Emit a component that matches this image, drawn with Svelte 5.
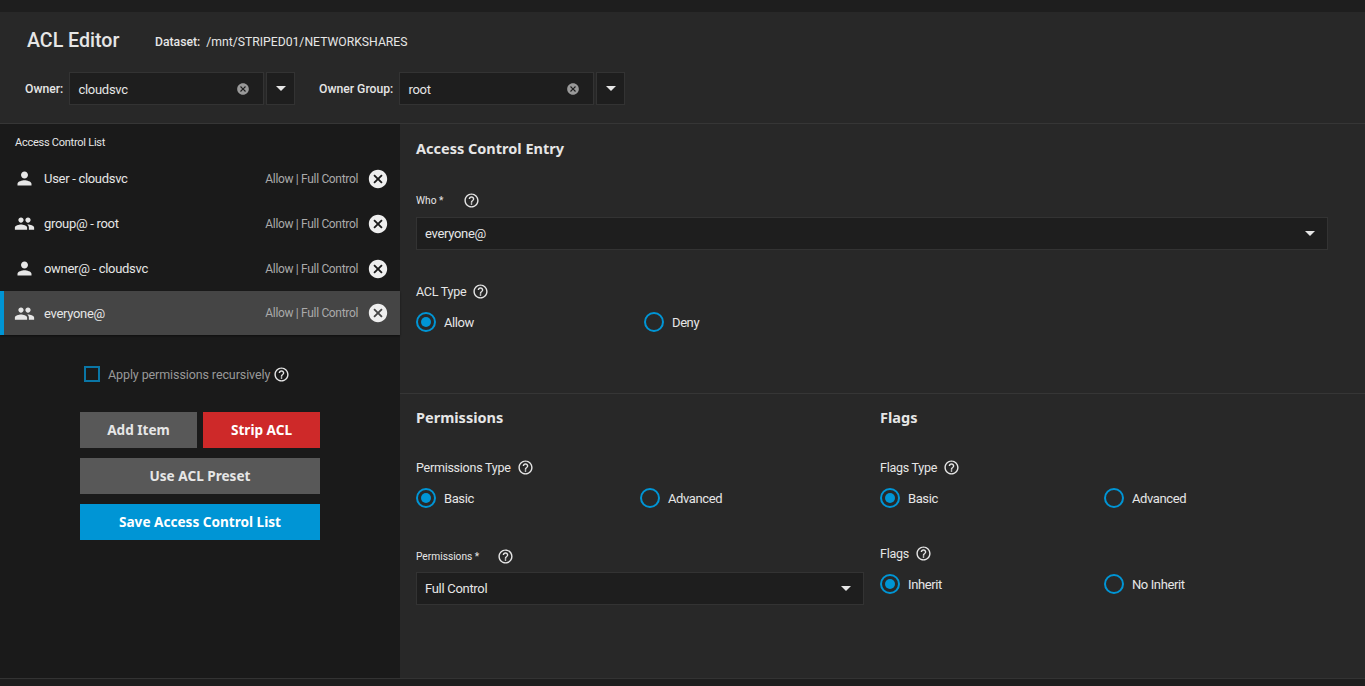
<script>
	const entries = [
		{ name: 'User - cloudsvc', group: false },
		{ name: 'group@ - root', group: true },
		{ name: 'owner@ - cloudsvc', group: false },
		{ name: 'everyone@', group: true }
	]

	let selected = $state(3)
	let aclType = $state('Allow')
	let permType = $state('Basic')
	let flagType = $state('Basic')
	let flags = $state('Inherit')

	const person = 'M12 12c2.21 0 4-1.79 4-4s-1.79-4-4-4-4 1.79-4 4 1.79 4 4 4zm0 2c-2.67 0-8 1.34-8 4v2h16v-2c0-2.66-5.33-4-8-4z'
	const people = 'M16 11c1.66 0 2.99-1.34 2.99-3S17.66 5 16 5c-1.66 0-3 1.34-3 3s1.34 3 3 3zm-8 0c1.66 0 2.99-1.34 2.99-3S9.66 5 8 5C6.34 5 5 6.34 5 8s1.34 3 3 3zm0 2c-2.33 0-7 1.17-7 3.5V19h14v-2.5c0-2.33-4.67-3.5-7-3.5zm8 0c-.29 0-.62.02-.97.05 1.16.84 1.97 1.97 1.97 3.45V19h6v-2.5c0-2.33-4.67-3.5-7-3.5z'
	const help = 'M11 18h2v-2h-2v2zm1-16C6.48 2 2 6.48 2 12s4.48 10 10 10 10-4.48 10-10S17.52 2 12 2zm0 18c-4.41 0-8-3.59-8-8s3.59-8 8-8 8 3.59 8 8-3.59 8-8 8zm0-14c-2.21 0-4 1.79-4 4h2c0-1.1.9-2 2-2s2 .9 2 2c0 2-3 1.75-3 5h2c0-2.25 3-2.5 3-5 0-2.21-1.79-4-4-4z'
	const cancel = 'M12 2C6.47 2 2 6.47 2 12s4.47 10 10 10 10-4.47 10-10S17.53 2 12 2zm5 13.59L15.59 17 12 13.41 8.41 17 7 15.59 10.59 12 7 8.41 8.41 7 12 10.59 15.59 7 17 8.41 13.41 12 17 15.59z'
</script>

{#snippet icon(d, cls)}
	<svg class={cls} viewBox="0 0 24 24"><path {d} /></svg>
{/snippet}

{#snippet radio(label, current, pick)}
	<button class="radio" onclick={() => pick(label)}>
		<span class="ring" class:on={current === label}></span>
		<span>{label}</span>
	</button>
{/snippet}

<div class="topbar"></div>
<div class="page">
	<header>
		<div class="title-row">
			<h1>ACL Editor</h1>
			<span class="dataset"><b>Dataset:</b> /mnt/STRIPED01/NETWORKSHARES</span>
		</div>
		<div class="owner-row">
			<span class="owner-label">Owner:</span>
			<div class="combo">
				<span>cloudsvc</span>
				{@render icon(cancel, 'clear')}
			</div>
			<div class="combo-btn"><i class="caret"></i></div>
			<span class="owner-label second">Owner Group:</span>
			<div class="combo">
				<span>root</span>
				{@render icon(cancel, 'clear')}
			</div>
			<div class="combo-btn"><i class="caret"></i></div>
		</div>
	</header>

	<div class="body">
		<aside>
			<div class="list-title">Access Control List</div>
			<ul>
				{#each entries as entry, i}
					<li class:active={selected === i} onclick={() => (selected = i)}>
						{@render icon(entry.group ? people : person, 'who-icon')}
						<span class="entry-name">{entry.name}</span>
						<span class="entry-perm">Allow | Full Control</span>
						{@render icon(cancel, 'remove')}
					</li>
				{/each}
			</ul>
			<div class="recursive">
				<span class="checkbox"></span>
				<span>Apply permissions recursively</span>
				{@render icon(help, 'help')}
			</div>
			<div class="actions">
				<div class="action-row">
					<button class="btn">Add Item</button>
					<button class="btn red">Strip ACL</button>
				</div>
				<button class="btn">Use ACL Preset</button>
				<button class="btn blue">Save Access Control List</button>
			</div>
		</aside>

		<main>
			<section class="entry">
				<h2>Access Control Entry</h2>
				<div class="small-label who">Who * {@render icon(help, 'help')}</div>
				<div class="select"><span>everyone@</span><i class="caret"></i></div>
				<div class="label acl">ACL Type {@render icon(help, 'help')}</div>
				<div class="radios">
					{@render radio('Allow', aclType, (v) => (aclType = v))}
					{@render radio('Deny', aclType, (v) => (aclType = v))}
				</div>
			</section>
			<section class="columns">
				<div class="col">
					<h2>Permissions</h2>
					<div class="label type">Permissions Type {@render icon(help, 'help')}</div>
					<div class="radios">
						{@render radio('Basic', permType, (v) => (permType = v))}
						{@render radio('Advanced', permType, (v) => (permType = v))}
					</div>
					<div class="small-label perms">Permissions * {@render icon(help, 'help')}</div>
					<div class="select"><span>Full Control</span><i class="caret"></i></div>
				</div>
				<div class="col flags">
					<h2>Flags</h2>
					<div class="label type">Flags Type {@render icon(help, 'help')}</div>
					<div class="radios">
						{@render radio('Basic', flagType, (v) => (flagType = v))}
						{@render radio('Advanced', flagType, (v) => (flagType = v))}
					</div>
					<div class="label flags-label">Flags {@render icon(help, 'help')}</div>
					<div class="radios">
						{@render radio('Inherit', flags, (v) => (flags = v))}
						{@render radio('No Inherit', flags, (v) => (flags = v))}
					</div>
				</div>
			</section>
		</main>
	</div>
</div>

<style>
	:global(body) {
		background: #1e1e1e;
		font-family: Roboto, sans-serif;
		color: #e6e6e6;
		overflow: hidden;
	}

	.topbar {
		height: 12px;
		background: #1e1e1e;
	}

	.page {
		height: 667px;
		box-sizing: border-box;
		background: #282828;
		border-bottom: 1px solid #333;
		display: flex;
		flex-direction: column;
	}

	header {
		height: 112px;
		box-sizing: border-box;
		padding: 16px 0 0 25px;
		border-bottom: 1px solid #363636;
		flex: none;
	}

	.title-row {
		display: flex;
		align-items: center;
		height: 24px;
	}

	h1 {
		margin: 0 0 0 2px;
		font-size: 19.6px;
		font-weight: 500;
		width: 128px;
	}

	.dataset {
		font-size: 12.2px;
		margin-top: 4px;
	}

	.dataset b {
		font-weight: 500;
		margin-right: 3px;
	}

	.owner-row {
		display: flex;
		align-items: center;
		margin-top: 20px;
	}

	.owner-label {
		font-size: 12.2px;
		font-weight: 500;
		width: 44px;
		padding-top: 1px;
	}

	.owner-label.second {
		width: 80px;
		margin-left: 24px;
	}

	.combo {
		width: 195px;
		height: 33px;
		box-sizing: border-box;
		background: #1e1e1e;
		border: 1px solid #333;
		padding: 1px 13px 0 8.5px;
		display: flex;
		align-items: center;
		justify-content: space-between;
		font-size: 13px;
		letter-spacing: -0.3px;
	}

	.clear {
		width: 14px;
		height: 14px;
		fill: #999;
	}

	.combo-btn {
		width: 29px;
		height: 33px;
		box-sizing: border-box;
		margin-left: 2px;
		background: #1e1e1e;
		border: 1px solid #333;
		display: flex;
		align-items: center;
		justify-content: center;
	}

	.caret {
		width: 0;
		height: 0;
		border-left: 5px solid transparent;
		border-right: 5px solid transparent;
		border-top: 5px solid #e6e6e6;
	}

	.body {
		flex: 1;
		display: flex;
		min-height: 0;
	}

	aside {
		width: 400px;
		flex: none;
		background: #1a1a1a;
	}

	.list-title {
		font-size: 11px;
		letter-spacing: -0.25px;
		padding: 12px 0 0 15px;
		height: 20px;
	}

	ul {
		list-style: none;
		margin: 0;
		padding: 0;
	}

	li {
		height: 45px;
		display: flex;
		align-items: center;
		padding: 0 13px 0 14px;
		font-size: 13px;
		letter-spacing: -0.3px;
		box-sizing: border-box;
		cursor: pointer;
	}

	li.active {
		height: 44.3px;
		background: #454545;
		box-shadow: inset 4px 0 0 #0095d5, 0 1px 2px rgba(0, 0, 0, 0.4);
	}

	.who-icon {
		width: 21px;
		height: 21px;
		fill: #e6e6e6;
		margin-right: 9px;
	}

	.entry-name {
		flex: 1;
	}

	.entry-perm {
		font-size: 12px;
		letter-spacing: -0.33px;
		color: #aaa;
		margin-right: 9px;
	}

	.remove {
		width: 22px;
		height: 22px;
		fill: #eee;
		margin-right: -2px;
	}

	.recursive {
		display: flex;
		align-items: center;
		margin: 30.5px 0 0 84px;
		font-size: 12.5px;
		letter-spacing: -0.1px;
		color: #999;
	}

	.checkbox {
		width: 16px;
		height: 16px;
		box-sizing: border-box;
		border: 2px solid #0a76a6;
		margin-right: 8px;
	}

	.help {
		width: 17px;
		height: 17px;
		fill: #e6e6e6;
		vertical-align: middle;
		flex: none;
	}

	.recursive .help {
		margin-left: 3px;
	}

	.actions {
		width: 240px;
		margin: 29px 0 0 80px;
		display: flex;
		flex-direction: column;
		gap: 10px;
	}

	.action-row {
		display: flex;
		gap: 6px;
	}

	.btn {
		flex: none;
		height: 36px;
		border: 0;
		padding: 0;
		background: #585858;
		color: #e6e6e6;
		font-family: "Noto Sans", sans-serif;
		font-weight: 700;
		font-size: 13.6px;
		cursor: pointer;
	}

	.action-row .btn {
		flex: 1;
	}

	.btn.red {
		background: #ce2929;
		color: #fff;
	}

	.btn.blue {
		background: #0095d5;
		color: #fff;
	}

	main {
		flex: 1;
		min-width: 0;
	}

	.entry {
		height: 270px;
		box-sizing: border-box;
		padding: 15px 37px 0 16px;
		border-bottom: 1px solid #363636;
	}

	.entry .radios {
		width: 456px;
	}

	h2 {
		margin: 0;
		font-family: "Noto Sans", sans-serif;
		font-size: 14.5px;
		font-weight: 700;
		line-height: 18px;
		color: #e6e6e6;
	}

	.small-label {
		font-size: 10.2px;
		font-weight: 400;
		display: flex;
		align-items: center;
		height: 16px;
	}

	.small-label.who {
		margin-top: 35px;
		margin-bottom: 9px;
		gap: 20px;
	}

	.small-label.perms {
		margin-top: 40px;
		margin-bottom: 8px;
		gap: 18px;
	}

	.select {
		height: 33px;
		box-sizing: border-box;
		background: #1e1e1e;
		border: 1px solid #333;
		padding: 0 12px 0 8px;
		display: flex;
		align-items: center;
		justify-content: space-between;
		font-size: 13px;
		letter-spacing: -0.3px;
	}

	.label {
		font-size: 12.5px;
		letter-spacing: -0.25px;
		display: flex;
		align-items: center;
		gap: 6px;
		height: 16px;
		margin-bottom: 13px;
	}

	.label.acl {
		margin-top: 33px;
	}

	.label.type {
		margin-top: 33px;
	}

	.label.flags-label {
		margin-top: 37px;
	}

	.radios {
		display: flex;
	}

	.radio {
		width: 50%;
		display: flex;
		align-items: center;
		gap: 8px;
		padding: 0;
		border: 0;
		background: none;
		color: #e6e6e6;
		font: 13px Roboto, sans-serif;
		letter-spacing: -0.4px;
		cursor: pointer;
	}

	.ring {
		width: 20px;
		height: 20px;
		box-sizing: border-box;
		border: 2px solid #0095d5;
		border-radius: 50%;
		padding: 3px;
	}

	.ring.on::before {
		content: '';
		display: block;
		width: 10px;
		height: 10px;
		border-radius: 50%;
		background: #0095d5;
	}

	.columns {
		display: flex;
		padding: 14px 0 0 16px;
	}

	.col {
		width: 448px;
	}

	.col.flags {
		margin-left: 16px;
	}
</style>
